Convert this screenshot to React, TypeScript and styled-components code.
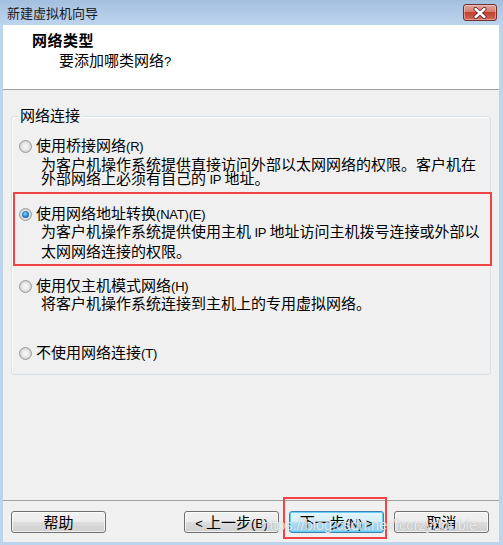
import React from 'react';
import styled, { createGlobalStyle, css } from 'styled-components';

const Global = createGlobalStyle`
  html, body { margin: 0; padding: 0; background: #bcd4ec; }
  body { font-family: "Noto Sans CJK SC", "Noto Sans", sans-serif; color: #000; }
`;

const Window = styled.div`
  position: relative;
  width: 503px;
  height: 545px;
  display: flex;
  flex-direction: column;
  background: #bcd4ec;
  overflow: hidden;
`;

const TitleBar = styled.div`
  height: 25px;
  flex: none;
  display: flex;
  align-items: flex-start;
  padding: 0 6px 0 7px;
  background: linear-gradient(#a3bfdf, #b4cce8 60%, #bdd4ed);
`;

const TitleText = styled.span`
  font-size: 13px;
  line-height: 26px;
  color: #1a1a1a;
`;

const CloseButton = styled.button`
  margin: 4px 0 0 auto;
  width: 34px;
  height: 17px;
  padding: 0;
  border: 1px solid #6f2f2a;
  border-radius: 3px;
  background: linear-gradient(#e6a59c, #d67a6e 45%, #c2402f 50%, #d4695c 100%);
  box-shadow: inset 0 0 0 1px rgba(255, 255, 255, 0.35);
  display: flex;
  align-items: center;
  justify-content: center;
`;

const Client = styled.div`
  flex: 1;
  margin: 0 4px 3px 3px;
  display: flex;
  flex-direction: column;
  background: #f0f0f0;
`;

const Header = styled.div`
  flex: none;
  box-sizing: border-box;
  height: 65px;
  background: #fff;
  border-bottom: 1px solid #a0a0a0;
  padding: 5px 0 0 29px;
`;

const HeaderTitle = styled.div`
  font-size: 15px;
  font-weight: bold;
  letter-spacing: 0.5px;
  line-height: 20px;
`;

const HeaderSub = styled.div`
  font-size: 15px;
  line-height: 20px;
  margin-left: 27px;
`;

const Body = styled.div`
  flex: 1;
  padding-top: 26px;
`;

const Group = styled.div`
  position: relative;
  margin: 0 8px;
  padding: 21px 7px 13px 7px;
  border: 1px solid #d5dfe5;
  border-radius: 3px;
  box-shadow: inset 1px 1px 0 #fff;
`;

const Legend = styled.span`
  position: absolute;
  top: -10px;
  left: 6px;
  padding: 0 2px;
  background: #f0f0f0;
  font-size: 15px;
  line-height: 16px;
`;

const Option = styled.div<{ $gap?: number }>`
  margin-top: ${(p) => p.$gap ?? 0}px;
`;

const Row = styled.label`
  display: flex;
  align-items: center;
  gap: 4px;
  height: 16px;
  font-size: 15px;
  line-height: 16px;
  white-space: nowrap;
`;

const Latin = styled.span`
  font-family: "Liberation Sans", Arial, sans-serif;
  font-size: 13px;
  letter-spacing: -0.2px;
`;

const Radio = styled.span<{ $checked?: boolean }>`
  position: relative;
  flex: none;
  width: 13px;
  height: 13px;
  box-sizing: border-box;
  border-radius: 50%;
  border: 1px solid #9a9a9a;
  background: radial-gradient(circle at 50% 50%, #f6f6f6 0, #eeeeee 35%, #cfcfcf 75%, #e4e4e4 100%);
  ${(p) =>
    p.$checked &&
    css`
      &::after {
        content: '';
        position: absolute;
        left: 2px;
        top: 2px;
        width: 7px;
        height: 7px;
        border-radius: 50%;
        background: radial-gradient(circle at 45% 40%, #9ad6fa 0, #2b8ad6 45%, #0b3f72 100%);
      }
    `}
`;

const Desc = styled.div<{ $lh: number; $top: number }>`
  margin: ${(p) => p.$top}px 0 0 22px;
  font-size: 15px;
  line-height: ${(p) => p.$lh}px;
  white-space: nowrap;
`;

const Highlight = styled.div`
  margin: 5px -9px 0 -6px;
  padding: 12px 0 4px 4px;
  border: 2px solid #f04444;
`;

const ButtonBar = styled.div`
  flex: none;
  display: flex;
  align-items: center;
  gap: 10px;
  border-top: 1px solid #a0a0a0;
  padding: 10px 10px 9px 8px;
`;

const Spacer = styled.div`
  flex: 1;
`;

const Button = styled.button<{ $default?: boolean }>`
  width: 95px;
  height: 22px;
  padding: 0;
  font-family: inherit;
  font-size: 15px;
  line-height: 20px;
  color: #000;
  border: 1px solid #707070;
  border-radius: 3px;
  background: linear-gradient(#f2f2f2, #ebebeb 50%, #dddddd 50%, #cfcfcf);
  box-shadow: inset 0 0 0 1px rgba(255, 255, 255, 0.7);
  white-space: nowrap;
  ${(p) =>
    p.$default &&
    css`
      border-color: #3c7fb1;
      background: linear-gradient(#e5f5fd, #d4eefb 50%, #aee0fa 50%, #8fd2f5);
      box-shadow: inset 0 0 0 1px #68d0f5;
    `}
`;

const Marked = styled.div`
  position: relative;
  display: flex;
  &::after {
    content: '';
    position: absolute;
    top: -14px;
    left: -6px;
    right: -3px;
    bottom: -6px;
    border: 2px solid #f04444;
    pointer-events: none;
  }
`;

const Watermark = styled.div`
  position: absolute;
  left: 261px;
  top: 516px;
  font-family: "Liberation Sans", Arial, sans-serif;
  font-size: 15px;
  letter-spacing: -0.2px;
  color: rgba(255, 255, 255, 0.8);
  text-shadow: 0 0 1px rgba(80, 80, 80, 0.45);
  pointer-events: none;
  white-space: nowrap;
`;

const CloseIcon = () => (
  <svg width="14" height="12" viewBox="0 0 14 12">
    <path d="M2.5 2 L11.5 10 M11.5 2 L2.5 10" stroke="#5a2620" strokeWidth="4" strokeLinecap="round" />
    <path d="M2.5 2 L11.5 10 M11.5 2 L2.5 10" stroke="#fff" strokeWidth="2.4" strokeLinecap="round" />
  </svg>
);

export default function App() {
  return (
    <>
      <Global />
      <Window>
        <TitleBar>
          <TitleText>新建虚拟机向导</TitleText>
          <CloseButton aria-label="关闭">
            <CloseIcon />
          </CloseButton>
        </TitleBar>
        <Client>
          <Header>
            <HeaderTitle>网络类型</HeaderTitle>
            <HeaderSub>要添加哪类网络<Latin>?</Latin></HeaderSub>
          </Header>
          <Body>
            <Group>
              <Legend>网络连接</Legend>
              <Option>
                <Row>
                  <Radio />
                  <span>使用桥接网络<Latin>(R)</Latin></span>
                </Row>
                <Desc $lh={14} $top={3}>
                  <div>为客户机操作系统提供直接访问外部以太网网络的权限。客户机在</div>
                  <div>外部网络上必须有自己的<Latin> IP </Latin>地址。</div>
                </Desc>
              </Option>
              <Highlight>
                <Row>
                  <Radio $checked />
                  <span>使用网络地址转换<Latin>(NAT)(E)</Latin></span>
                </Row>
                <Desc $lh={18} $top={0}>
                  <div>为客户机操作系统提供使用主机<Latin> IP </Latin>地址访问主机拨号连接或外部以</div>
                  <div>太网网络连接的权限。</div>
                </Desc>
              </Highlight>
              <Option $gap={12}>
                <Row>
                  <Radio />
                  <span>使用仅主机模式网络<Latin>(H)</Latin></span>
                </Row>
                <Desc $lh={18} $top={0}>
                  <div>将客户机操作系统连接到主机上的专用虚拟网络。</div>
                </Desc>
              </Option>
              <Option $gap={33}>
                <Row>
                  <Radio />
                  <span>不使用网络连接<Latin>(T)</Latin></span>
                </Row>
              </Option>
            </Group>
          </Body>
          <ButtonBar>
            <Button>帮助</Button>
            <Spacer />
            <Button><Latin>&lt; </Latin>上一步<Latin>(B)</Latin></Button>
            <Marked>
              <Button $default>下一步<Latin>(N) &gt;</Latin></Button>
            </Marked>
            <Button>取消</Button>
          </ButtonBar>
        </Client>
        <Watermark>https://blog.csdn.net/fccrzydouble</Watermark>
      </Window>
    </>
  );
}
